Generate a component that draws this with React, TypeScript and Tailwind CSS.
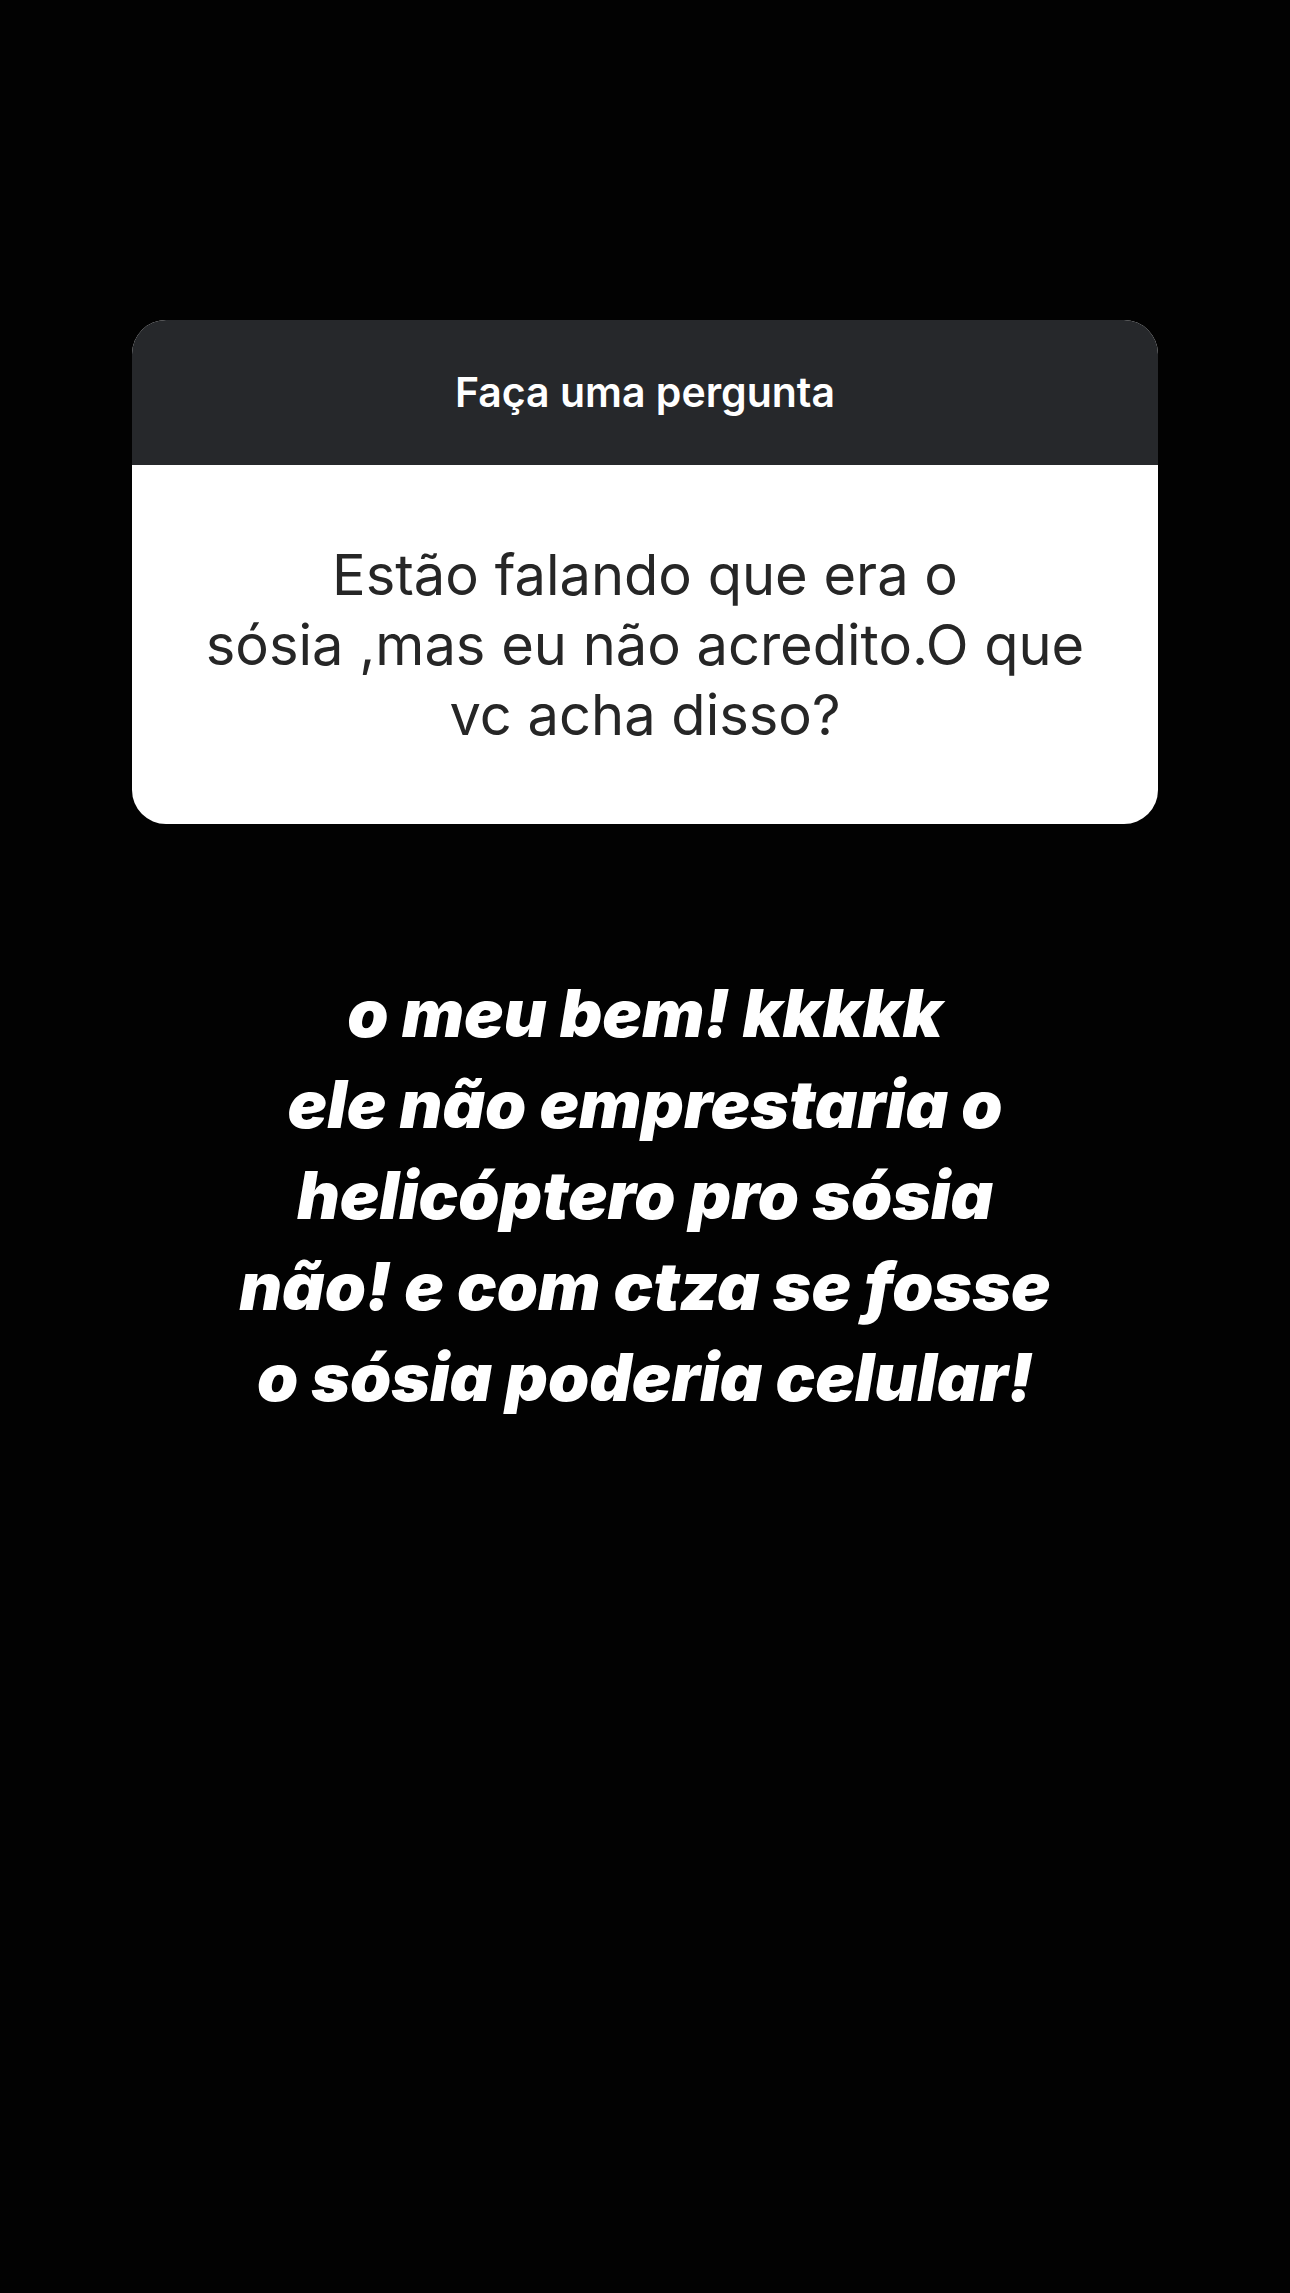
import React from 'react';

const question = ['Estão falando que era o', 'sósia ,mas eu não acredito.O que', 'vc acha disso?'];

const answerLines = [
  'o meu bem! kkkkk',
  'ele não emprestaria o',
  'helicóptero pro sósia',
  'não! e com ctza se fosse',
  'o sósia poderia celular!',
];

const App: React.FC = () => {
  return (
    <div className="min-h-[2293px] w-full bg-[#020202] pt-[320px]">
      {/* Question sticker */}
      <div className="mx-[132px] overflow-hidden rounded-[34px] bg-white">
        <div className="flex h-[145px] items-center justify-center bg-[#26282b]">
          <span className="font-['Inter',sans-serif] text-[41px] font-semibold text-white">
            Faça uma pergunta
          </span>
        </div>
        <div className="flex h-[359px] flex-col items-center justify-center px-10">
          {question.map((line) => (
            <p
              key={line}
              className="text-center font-['Inter',sans-serif] text-[56px] leading-[70px] text-[#262626]"
            >
              {line}
            </p>
          ))}
        </div>
      </div>

      {/* Answer */}
      <div className="mt-[144px] flex flex-col items-center">
        {answerLines.map((line) => (
          <p
            key={line}
            className="text-center font-['Inter',sans-serif] text-[66px] font-black italic leading-[91px] text-white"
          >
            {line}
          </p>
        ))}
      </div>
    </div>
  );
};

export default App;
